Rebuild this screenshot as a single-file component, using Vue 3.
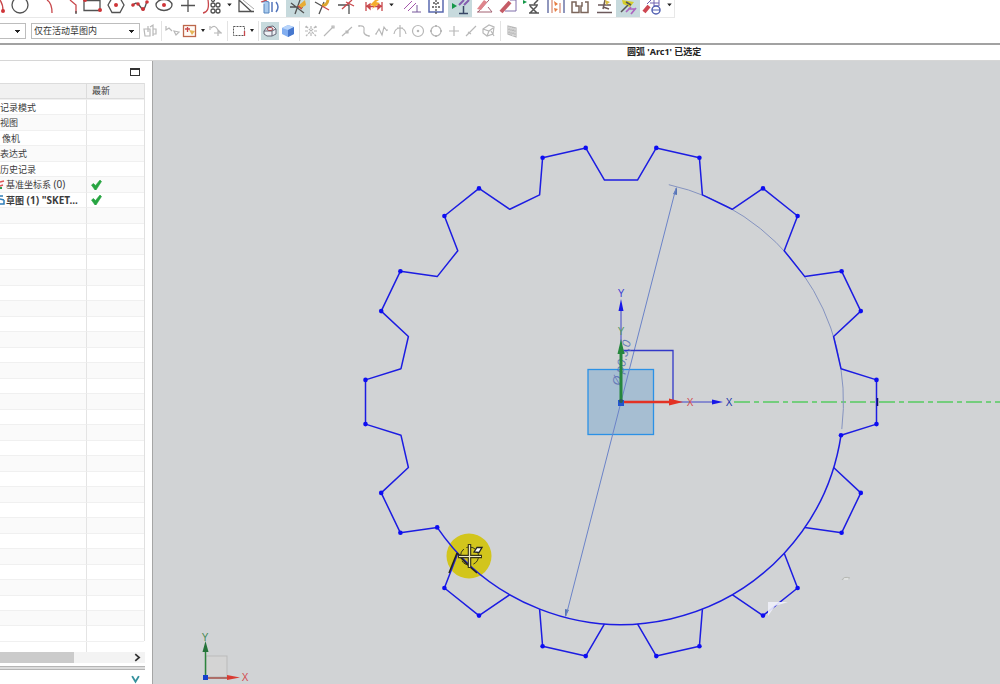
<script setup>
import { ref } from 'vue'

const scope = ref('仅在活动草图内')
const filter = ref('')

const curveTools = [
  { id: 'circle', label: '圆' },
  { id: 'fillet', label: '圆角' },
  { id: 'chamfer', label: '倒斜角' },
  { id: 'rect', label: '矩形' },
  { id: 'polygon', label: '多边形' },
  { id: 'spline', label: '艺术样条' },
  { id: 'ellipse', label: '椭圆' },
  { id: 'point', label: '点' },
  { id: 'pattern', label: '阵列曲线' },
  { id: 'caret', label: '更多曲线' },
  { id: 'derive', label: '派生直线' },
  { id: 'project', label: '投影曲线' },
  { id: 'sep' },
  { id: 'trim', label: '快速修剪', active: true },
  { id: 'extend', label: '快速延伸' },
  { id: 'corner', label: '制作拐角' },
  { id: 'sep' },
  { id: 'dimension', label: '快速尺寸' },
  { id: 'caret', label: '更多尺寸' },
  { id: 'sep' },
  { id: 'constraint', label: '几何约束' },
  { id: 'symmetric', label: '设为对称' },
  { id: 'showcon', label: '显示约束', active: true },
  { id: 'autocon', label: '自动约束' },
  { id: 'autodim', label: '自动尺寸' },
  { id: 'remove', label: '关系浏览器' },
  { id: 'animate', label: '动画尺寸' },
  { id: 'convert', label: '转换参考' },
  { id: 'alternate', label: '备选解' },
  { id: 'infer', label: '推断约束', active: true },
  { id: 'inferset', label: '约束设置' },
  { id: 'caret', label: '更多约束' }
]
const snaps = ['snap', 'end', 'mid', 'control', 'cross', 'arcmid', 'center', 'quad', 'exist', 'oncurve', 'onface']

const rows = [
  { name: '记录模式' }, { name: '视图' }, { name: '像机', pad: true }, { name: '表达式' }, { name: '历史记录' },
  { name: '基准坐标系', extra: ' (0)', icon: 'csys', done: true },
  { name: '草图', extra: ' (1) "SKET...', icon: 'sketch', done: true, bold: true },
  ...Array.from({ length: 28 }, () => ({ name: '' }))
]

const CX = 621
const CY = 402
const ROOT = 222.5
const TIP = 256.5
const at = (r, deg) => {
  const a = (deg * Math.PI) / 180
  return [+(CX + r * Math.cos(a)).toFixed(1), +(CY - r * Math.sin(a)).toFixed(1)]
}
const tooth = (k) => {
  const m = (k * 360) / 14
  return [at(ROOT, m - 8.6), at(TIP, m - 4.95), at(TIP, m + 4.95), at(ROOT, m + 8.6)]
}
const teeth = Array.from({ length: 14 }, (_, k) => tooth(k))
const outline = teeth.slice(0, 9).flat().join(' ')
const lower = teeth.slice(9).map((t) => t.join(' '))
const dots = [...teeth.flatMap((t) => [t[1], t[2]]), teeth[0][0], teeth[8][3]]
const rim = `M${teeth[8][3]}A${ROOT} ${ROOT} 0 0 0 ${teeth[0][0]}`
const thin = `M${at(ROOT, 77.6)}A${ROOT} ${ROOT} 0 0 1 ${at(ROOT, -7)}`
</script>

<template>
  <div class="app">
    <header>
      <div class="bar curves">
        <button class="tool edge" aria-label="圆弧"><svg viewBox="0 0 8 20"><path d="M0 0Q3 4 3 11" class="r" /><circle cx="3" cy="11" r="2" class="rf" /></svg></button>
        <template v-for="(t, i) in curveTools" :key="i">
          <i v-if="t.id === 'sep'" class="gap"></i>
          <button v-else-if="t.id === 'caret'" class="caret" :aria-label="t.label"><svg viewBox="0 0 10 20"><path d="M3 4h5l-2.500 3z" fill="#222" /></svg></button>
          <button v-else class="tool" :class="{ active: t.active }" :aria-label="t.label">
            <svg viewBox="0 0 24 20">
              <g v-if="t.id === 'circle'"><circle cx="12" cy="5" r="8" class="k" /></g>
              <g v-else-if="t.id === 'fillet'"><path d="M15 0Q20 3 20 13" class="r" /></g>
              <g v-else-if="t.id === 'chamfer'"><path d="M14 0L20 5V13" class="r" /><path d="M20 11v3" class="k" /></g>
              <g v-else-if="t.id === 'rect'"><path d="M4 0V10.500H20V0M4 .5H20" class="k" /><circle cx="20" cy="10" r="2" class="rf" /><circle cx="5" cy="0" r="2" class="rf" /></g>
              <g v-else-if="t.id === 'polygon'"><path d="M4 5L8-2H16L20 5L16 12.500H8Z" class="k" /><circle cx="12" cy="5" r="2" class="rf" /></g>
              <g v-else-if="t.id === 'spline'"><path d="M4 6Q8 1 11 5T15 10T19 1" class="k" /><circle cx="5" cy="5" r="1.800" class="rf" /><circle cx="10" cy="4" r="1.800" class="rf" /><circle cx="15" cy="9" r="2" class="rf" /><circle cx="19" cy="2" r="1.800" class="rf" /></g>
              <g v-else-if="t.id === 'ellipse'"><ellipse cx="12" cy="5" rx="8" ry="5.500" class="k" /><circle cx="12" cy="5" r="2" class="rf" /></g>
              <g v-else-if="t.id === 'point'"><path d="M5 5.500H19M12 0V12" class="k" /></g>
              <g v-else-if="t.id === 'pattern'"><path d="M3 13Q10 12 8 0" class="r" /><g class="k"><circle cx="13" cy="5" r="2" /><circle cx="18" cy="5" r="2" /><circle cx="13" cy="11" r="2" /><circle cx="18" cy="11" r="2" /><circle cx="13" cy="0" r="1.500" /></g></g>
              <g v-else-if="t.id === 'derive'"><path d="M5 0V11.500H20M5 0L18 12" class="k" /><path d="M9 0L20 9" class="g" /></g>
              <g v-else-if="t.id === 'project'"><path d="M4 2Q7 0 11 2V13H6V4" fill="#a9caec" stroke="#5585bf" /><path d="M3 2L9 0" class="r" /><path d="M14 2V12M18 2Q22 7 18 12" fill="none" stroke="#5476bc" stroke-width="1.500" /></g>
              <g v-else-if="t.id === 'trim'"><path d="M5 3L18 13M9 14L14 0M4 7H17" class="k" /><path d="M12 6L19 0L20 5L14 9Z" fill="#e7ab35" /><path d="M12 6L16 9" class="r" /></g>
              <g v-else-if="t.id === 'extend'"><path d="M5 2L12 6M9 14L14 2" class="k" /><path d="M12 5Q17 6 18 0" fill="none" stroke="#dca62f" stroke-width="3" /><path d="M12 6L19 10" class="r" /></g>
              <g v-else-if="t.id === 'corner'"><path d="M4 5H15V14" class="k" /><path d="M8 9L18 0M12 2L20 6" class="r" /></g>
              <g v-else-if="t.id === 'dimension'"><path d="M4 2V11M20 2V11M5 6.500H19M5 6L8 4V9ZM19 6L16 4V9Z" class="r" /><path d="M13 0L8 5L12 6L10 9L18 3L14 2L17 0Z" fill="#f5ae2d" /></g>
              <g v-else-if="t.id === 'constraint'"><path d="M4 9L12 1M8 11L16 3" stroke="#a556ac" /><path d="M12 12H21M17 5V12" stroke="#77599b" /></g>
              <g v-else-if="t.id === 'symmetric'"><path d="M5 0V12H19V0" fill="none" stroke="#5a69b0" stroke-width="1.500" /><path d="M12 0V14" class="k" stroke-dasharray="2 1" /><path d="M9 3h2M13 3h2M8 7h2M14 7h2" class="k" /></g>
              <g v-else-if="t.id === 'showcon'"><path d="M4 3L9 6L4 9Z" fill="#159849" /><path d="M11 5L16 0M16 5L21 0" stroke="#845eaf" stroke-width="2" /><path d="M11 13.500H20M15.500 6V13" stroke="#384766" stroke-width="1.500" /></g>
              <g v-else-if="t.id === 'autocon'"><path d="M5 12H20M6 12L17 0M16 7L20 12" stroke="#a26071" /><path d="M5 9L12 0L15 2L9 10Z" fill="#df858c" /></g>
              <g v-else-if="t.id === 'autodim'"><path d="M5 12L14 2" stroke="#c55c66" stroke-width="4" /><path d="M14 0H20V11H9" fill="none" stroke="#806eaa" /></g>
              <g v-else-if="t.id === 'remove'"><path d="M3 0L7 2L3 4Z" fill="#159849" /><path d="M9 5H18M10 6L17 13M17 6L10 13M9 13H19M14 4L18 0" stroke="#555" stroke-width="1.500" /></g>
              <g v-else-if="t.id === 'animate'"><path d="M4 0V13M20 0V13" stroke="#6c76a8" stroke-width="1.500" /><path d="M8 0V13M16 3V13" stroke="#cf7054" /><path d="M10 1L14 4L11 6ZM10 8L14 9L11 12Z" fill="#e67c40" /></g>
              <g v-else-if="t.id === 'convert'"><path d="M4 2V12.500H11V6H8V2ZM14 2V6H13V12.500H20V2H17" fill="none" stroke="#7b665b" stroke-width="1.500" /></g>
              <g v-else-if="t.id === 'alternate'"><path d="M6 5H19M13 0L11 9M11 7L17 9M5 12.500H20" stroke="#6c595b" stroke-width="1.500" /><path d="M13 0L18 2L14 5Z" fill="#d9bd45" /></g>
              <g v-else-if="t.id === 'infer'"><path d="M6 0L18 2L14 7L7 4Z" fill="#d5cd28" /><path d="M10 2L15 5M5 12L12 5" stroke="#555" stroke-width="1.500" /><path d="M10 12L15 7M15 14L20 8M12 9H19" stroke="#ac65c0" stroke-width="1.700" /></g>
              <g v-else-if="t.id === 'inferset'"><path d="M4 12L9 6" stroke="#cd4752" stroke-width="4" /><path d="M7 4L11 0M14 0V6H19V0M10 3H19" stroke="#7062b0" fill="none" /><circle cx="16" cy="10" r="4" fill="#fff" stroke="#5361b2" stroke-width="1.500" /><path d="M12 10H20" stroke="#5361b2" /></g>
            </svg>
          </button>
        </template>
      </div>

      <div class="bar selection">
        <select v-model="filter" class="filter" aria-label="过滤器"><option value=""></option></select>
        <select v-model="scope" class="scope" aria-label="选择范围"><option>仅在活动草图内</option></select>
        <button class="mini wide" aria-label="选择意图"><svg viewBox="0 0 18 18" class="faint"><path d="M3 7H9V14H4ZM7 4V10M9 5L12 3V14M12 7H15V12H12" /></svg></button>
        <i class="rule near"></i>
        <button class="mini" aria-label="重置"><svg viewBox="0 0 18 18" class="faint"><path d="M3 4V8L6 6L9 9M11 9L16 10L13 13Z" /></svg></button>
        <button class="mini" aria-label="选择过滤"><svg viewBox="0 0 18 18"><rect x="2.500" y="3.500" width="12" height="11" fill="#fffaf5" stroke="#bc674b" stroke-width="1.300" /><path d="M4 7H9M6.500 5V10" class="r" /><path d="M8 8L14 9L11 13Z" fill="#e5b657" /></svg></button>
        <button class="caret small" aria-label="更多过滤"><svg viewBox="0 0 8 18"><path d="M2 7h4l-2 3z" fill="#222" /></svg></button>
        <button class="mini" aria-label="捕捉方式"><svg viewBox="0 0 18 18" class="faint"><path d="M4 6Q8 2 11 8V14M7 11H15M3 4V8M11 8L14 11" /></svg></button>
        <i class="rule"></i>
        <button class="mini" aria-label="矩形选择"><svg viewBox="0 0 18 18"><rect x="3.500" y="4.500" width="11" height="9" fill="none" stroke="#565656" stroke-dasharray="2 1" /><path d="M14.500 9V14" class="r" /></svg></button>
        <button class="caret small" aria-label="更多选择"><svg viewBox="0 0 8 18"><path d="M2 7h4l-2 3z" fill="#222" /></svg></button>
        <i class="rule"></i>
        <button class="mini active" aria-label="显示线框"><svg viewBox="0 0 18 18"><path d="M3 9L6 5L12 4L15 7V12L11 14H6L3 12ZM3 9H11L15 7M11 9V14" fill="#eef0f5" stroke="#646776" /><ellipse cx="9" cy="7" rx="3" ry="1.500" fill="none" stroke="#a4474e" /></svg></button>
        <button class="mini" aria-label="着色"><svg viewBox="0 0 18 18"><path d="M3 6L9 3L15 5V12L9 15L3 12Z" fill="#82aef0" /><path d="M3 6L9 3L15 5L9 8Z" fill="#b8d4fa" /><path d="M9 8L15 5V12L9 15Z" fill="#4778ce" /></svg></button>
        <i class="rule"></i>
        <div class="snaps">
          <button v-for="s in snaps" :key="s" class="mini" :aria-label="s">
            <svg viewBox="0 0 18 18" class="faint">
              <path v-if="s === 'snap'" d="M4 4L14 14M14 4L4 14M9 4V7M3 9H6M12 9H15M9 11V14M4 4V6M14 4V6" stroke-dasharray="3 1" />
              <path v-else-if="s === 'end'" d="M4 14L13 5M12 4h2v2h-2z" />
              <path v-else-if="s === 'mid'" d="M4 14L14 5M8 9h2v2h-2z" />
              <path v-else-if="s === 'control'" d="M4 4Q10 3 9 8T14 14M4 3v2M14 13v2" />
              <path v-else-if="s === 'cross'" d="M3 12L6 7L9 13L11 5L14 9M2 12h2M8 12h2M13 8h2" />
              <path v-else-if="s === 'arcmid'" d="M3 12Q4 6 9 6T15 12M9 3V15M6 6H12" />
              <g v-else-if="s === 'center'"><circle cx="9" cy="9" r="5.500" /><circle cx="9" cy="9" r=".7" /></g>
              <g v-else-if="s === 'quad'"><circle cx="9" cy="9" r="5" /><path d="M8 4h2M8 14h2M4 8v2M14 8v2" stroke-width="2" /></g>
              <path v-else-if="s === 'exist'" d="M4 9H14M9 4V14" />
              <path v-else-if="s === 'oncurve'" d="M4 14L14 4M6 10L9 12" />
              <path v-else d="M3 7L9 3L14 5L13 12L7 14L3 11ZM3 7L9 9L13 6M9 9L7 14M11 9L14 14" />
            </svg>
          </button>
        </div>
        <i class="rule"></i>
        <button class="mini" aria-label="栅格"><svg viewBox="0 0 18 18" class="faint"><path d="M5 4L13 6V15L5 12ZM7 5V13M9 5V14M11 6V14M5 7L13 9M5 10L13 12" /></svg></button>
      </div>
    </header>

    <p class="status">圆弧 'Arc1' 已选定</p>

    <main>
      <aside>
        <div class="title"><button class="max" aria-label="最大化"></button></div>
        <table>
          <thead><tr><th></th><th>最新</th></tr></thead>
          <tbody>
            <tr v-for="(r, i) in rows" :key="i" :class="{ bold: r.bold }">
              <td>
                <div class="cell" :class="{ pad: r.pad }">
                  <svg v-if="r.icon === 'csys'" viewBox="0 0 6 12" class="node"><path d="M0 3L4 2M0 7L3 6" stroke="#d55" stroke-width="1.500" /><path d="M0 9H2" stroke="#2a9a50" stroke-width="2" /></svg>
                  <svg v-else-if="r.icon === 'sketch'" viewBox="0 0 6 12" class="node"><path d="M0 2H3M0 5L4 6M0 10H4V6" fill="none" stroke="#2f7db8" stroke-width="1.500" /></svg>
                  <span>{{ r.name }}<span class="latin">{{ r.extra }}</span></span>
                </div>
              </td>
              <td><div class="cell mark"><svg v-if="r.done" viewBox="0 0 10 10" class="tick"><path d="M0 5L2 3.500L4 5.500L8.500 0L10 1.500L4.500 10H3.500Z" fill="#27a541" stroke="#27a541" stroke-width=".6" /></svg></div></td>
            </tr>
          </tbody>
        </table>
        <div class="rest"></div>
        <div class="scroll"><div class="thumb"></div><button aria-label="向右滚动"><svg viewBox="0 0 8 8"><path d="M2 1L5.500 4L2 7" fill="none" stroke="#333" stroke-width="1.500" /></svg></button></div>
        <div class="split"></div>
        <div class="foot"><button aria-label="展开"><svg viewBox="0 0 8 8"><path d="M1 1L4 6L7 1" fill="none" stroke="#35919d" stroke-width="1.700" /></svg></button></div>
      </aside>

      <section class="canvas">
        <svg viewBox="153 61 847 623" preserveAspectRatio="xMinYMin meet" role="img" aria-label="草图">
          <path d="M734 402H1000" stroke="#55cc60" stroke-width="1.500" stroke-dasharray="16 4 5 4" />
          <path :d="thin" fill="none" stroke="#8593c0" />
          <path d="M677 187L673 194L677 195ZM565 617L565 609L569 610Z" fill="#5675b4" />

          <rect x="588" y="369.500" width="65.500" height="65" fill="#6ba3cf" fill-opacity=".42" stroke="#2b91e6" stroke-width="1.300" />
          <path d="M676 188L566 616" stroke="#6b83c8" />
          <path d="M621 350.500H673V402" fill="none" stroke="#3238c8" stroke-width="1.300" />
          <path d="M621 402V310M621 402H714" stroke="#3e45c8" />
          <text class="dim" transform="translate(620 386) rotate(-76)">Ø p0:3,0</text>
          <path d="M621 299L618.500 311H623.500ZM723 402L712 399.500V404.500Z" fill="#1818e8" />
          <path d="M621 402V348" stroke="#25873c" stroke-width="3" />
          <path d="M621 339L617.500 354H624.500Z" fill="#25873c" />
          <path d="M621 402H671" stroke="#e33224" stroke-width="2.500" />
          <path d="M683 402L669 398.500V405.500Z" fill="#e33224" />
          <rect x="618" y="400" width="6" height="6" fill="#2155cf" /><circle cx="621" cy="401" r="2" fill="#295e59" />
          <g class="axis">
            <text x="621" y="297" fill="#3b3bd4">Y</text><text x="621" y="335" fill="#559961">Y</text>
            <text x="690" y="406" fill="#d34c50">X</text><text x="729" y="406" fill="#2034a8">X</text>
          </g>

          <circle cx="469" cy="556" r="22.500" fill="#d2c51c" />
          <g class="gear">
            <polyline :points="outline" />
            <polyline v-for="(l, i) in lower" :key="i" :points="l" />
            <path :d="rim" />
          </g>
          <circle v-for="(d, i) in dots" :key="i" :cx="d[0]" :cy="d[1]" r="2.300" fill="#0d0df2" />
          <path d="M877.500 398V406" stroke="#10106a" stroke-width="1.500" />

          <path d="M457 553Q464 562 477 573M457 553L449 573" fill="none" stroke="#25231a" stroke-width="1.500" />
          <circle cx="469.500" cy="556" r="9" fill="none" stroke="#38351a" stroke-dasharray="10 3" />
          <path d="M458 556.500H482M469.500 544V568" stroke="#38351a" stroke-width="3.500" />
          <path d="M459 556.500H481M469.500 545V567" stroke="#efecc2" stroke-width="1.200" />
          <path d="M474 552L477 547.500H482L479 552.500Z" fill="#fff" stroke="#222" stroke-width="1.300" />

          <path d="M768 602H788L775 606L768 616Z" fill="#f0f1fa" fill-opacity=".9" />
          <path d="M842 580Q844 576 850 578" fill="none" stroke="#b6b8b3" /><path d="M844 579H848" stroke="#eef0ec" />

          <rect x="206" y="656" width="21" height="21" fill="#d4d4d4" stroke="#bbb" />
          <path d="M205.500 678V652" stroke="#2c843d" stroke-width="1.500" /><path d="M205.500 641L202.500 652H208.500Z" fill="#25733a" />
          <path d="M205 678H230" stroke="#a34f47" stroke-width="1.500" /><path d="M240 677.500L227 675V680Z" fill="#d93b32" />
          <rect x="203" y="675" width="5" height="5" fill="#1640cc" />
          <g class="axis"><text x="205" y="641" fill="#468a55">Y</text><text x="245" y="681" fill="#d34c50">X</text></g>
        </svg>
      </section>
    </main>
  </div>
</template>

<style>
html, body, #app { height: 100%; margin: 0; }
</style>

<style scoped>
.app {
  display: flex;
  flex-direction: column;
  height: 100vh;
  overflow: hidden;
  background: #fff;
  color: #3c3c3c;
  font: 9px/15px "Noto Sans", "Noto Sans CJK SC", sans-serif;
}
button { margin: 0; padding: 0; border: 0; background: none; display: block; flex: none; }
svg { display: block; }
header { border-bottom: 2px solid #a2a2a2; }
.bar { display: flex; }
.curves { box-sizing: border-box; height: 18px; width: max-content; border: solid #e8e8e8; border-width: 0 1px 1px 0; overflow: hidden; }
.selection { height: 25px; align-items: center; }
.tool { width: 24px; height: 17px; overflow: hidden; }
.tool svg { width: 24px; height: 20px; }
.edge, .edge svg { width: 8px; }
button.active { background: #c7dadd; }
.caret { width: 10px; }
.caret svg { width: 10px; height: 18px; }
.small, .small svg { width: 8px; }
.gap { width: 4px; }
.rule { width: 1px; height: 20px; margin: 0 2px; background: #e3e3e3; }
.near { margin: 0 1px; }
.mini { width: 18px; }
.mini svg { width: 18px; height: 18px; margin: auto; }
.wide { width: 20px; }
.snaps { display: flex; width: 196px; }
.snaps .mini { flex: 1; min-width: 0; }
.k { fill: none; stroke: #525252; stroke-width: 1.3; }
.r { fill: none; stroke: #c8474b; stroke-width: 1.3; }
.g { fill: none; stroke: #aaa; }
.rf { fill: #cf3438; }
.faint { fill: none; stroke: #b8b8b8; stroke-width: 1.2; }
select {
  appearance: none;
  box-sizing: border-box;
  height: 16px;
  margin: 0;
  padding: 0 2px;
  border: 1px solid #bdbdbd;
  border-radius: 0;
  color: #333;
  font: inherit;
  line-height: 14px;
  background: linear-gradient(#222, #222) no-repeat right 5px top 6px / 5px 1px,
    linear-gradient(#222, #222) no-repeat right 6px top 7px / 3px 1px,
    linear-gradient(#222, #222) no-repeat right 7px top 8px / 1px 1px, #fff;
}
.filter { width: 26px; border-left: 0; margin-right: 5px; }
.scope { width: 109px; }
.status {
  margin: 0;
  height: 15px;
  padding-left: 627px;
  border-bottom: 1px solid #d6d6d6;
  color: #222;
  font-weight: 700;
  line-height: 14px;
  white-space: nowrap;
}
main { display: flex; flex: 1; min-height: 0; }
aside { box-sizing: border-box; width: 153px; flex: none; display: flex; flex-direction: column; padding-right: 7px; border-right: 1px solid #a5a5a5; }
.title { height: 22px; display: flex; justify-content: flex-end; align-items: center; padding-right: 5px; }
.max { box-sizing: border-box; width: 10px; height: 8px; border: 1px solid #333; border-top-width: 2px; }
table { flex: 1; min-height: 0; width: 145px; table-layout: fixed; border-collapse: separate; border-spacing: 0; border-right: 1px solid #e0e0e0; }
th { height: 16px; padding: 0 0 0 5px; text-align: left; font-weight: 400; background: #f1f1f1; border: solid #dcdcdc; border-width: 1px 0; line-height: 14px; box-sizing: border-box; }
th:first-child { width: 87px; border-right-width: 1px; }
td { padding: 0; border-top: 1px solid #f0f0f0; line-height: 14px; white-space: nowrap; }
td:first-child { border-right: 1px solid #e4e4e4; }
tr:nth-child(even) td { background: #fafafa; }
.cell { display: flex; align-items: center; height: 14px; overflow: hidden; white-space: pre; }
.pad { padding-left: 2px; }
.node { width: 6px; height: 12px; flex: none; }
.latin { font-size: 10px; }
.mark { padding-left: 4px; }
.tick { width: 11px; height: 10px; }
.bold { font-weight: 700; }
.rest { height: 10px; width: 144px; border-top: 1px solid #f0f0f0; background: linear-gradient(#e4e4e4, #e4e4e4) no-repeat 86px 0 / 1px 100%, #fff; }
.scroll { display: flex; align-items: center; height: 11px; width: 145px; background: #f3f3f3; }
.thumb { flex: 1; height: 100%; background: #cbcbcb; }
.scroll button { width: 71px; padding-left: 59px; box-sizing: border-box; }
.scroll svg, .foot svg { width: 9px; height: 9px; }
.split { height: 2px; margin: 3px 0 0; width: 145px; border: solid #b5b5b5; border-width: 1px 0; background: #ddd; }
.foot { height: 14px; display: flex; justify-content: flex-end; align-items: flex-end; padding-right: 5px; }
.canvas { flex: 1; min-width: 0; background: #d1d3d5; overflow: hidden; }
.canvas svg { width: 100%; height: 100%; }
.gear { fill: none; stroke: #1c1ce2; stroke-width: 1.5; stroke-linejoin: round; }
.axis { font: 10px "Liberation Sans", sans-serif; text-anchor: middle; }
.dim { font: italic 12px "Liberation Sans", sans-serif; fill: #667bb8; }
</style>
